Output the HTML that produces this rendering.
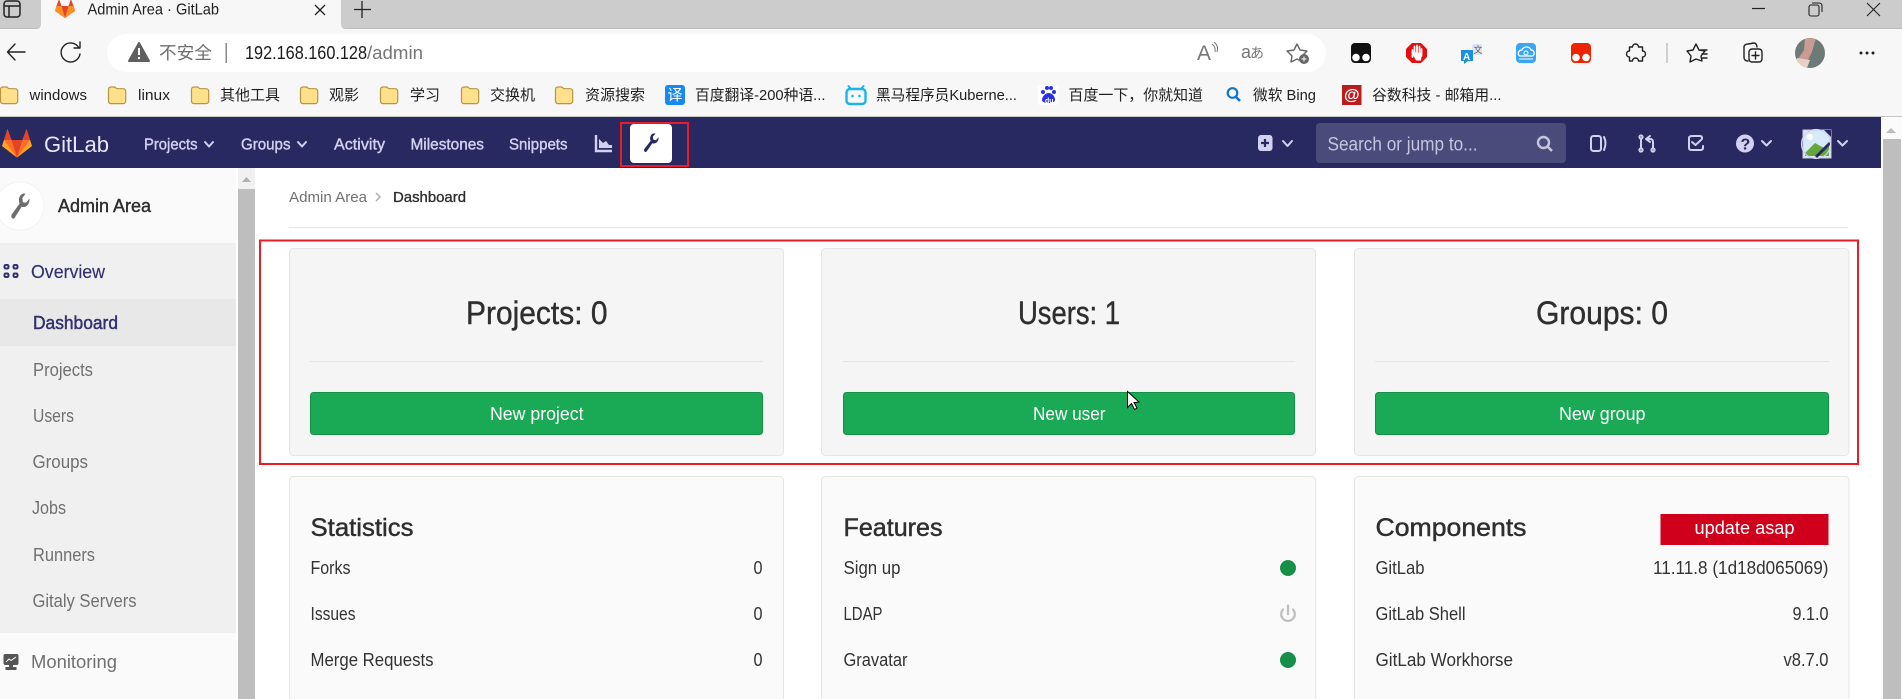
<!DOCTYPE html>
<html lang="zh"><head><meta charset="utf-8"><title>Admin Area · GitLab</title>
<style>
html,body{margin:0;padding:0;background:#fff;width:1902px;height:699px;overflow:hidden}
svg{display:block}
text{font-family:"Liberation Sans","Noto Sans CJK SC",sans-serif;white-space:pre}
.bm{font-size:15px;fill:#1f1f1f}
.nav{font-size:16px;fill:#d1d1f0;stroke:#d1d1f0;stroke-width:.4}
.side{font-size:18px;fill:#707070}
.row{font-size:18px;fill:#333}
.h{font-size:25px;fill:#2e2e2e;stroke:#2e2e2e;stroke-width:.45}
.t{font-size:32px;fill:#2e2e2e;stroke:#2e2e2e;stroke-width:.4}
.b{font-size:18px;fill:#fff}
.ic{fill:none;stroke:#d1d1f0;stroke-width:2;stroke-linecap:round;stroke-linejoin:round}
.tb{fill:none;stroke:#222;stroke-width:1.4;stroke-linecap:round;stroke-linejoin:round}
</style></head><body>
<svg xmlns="http://www.w3.org/2000/svg" width="1902" height="699" viewBox="0 0 1902 699">
<defs>
<path id="fd" d="M1.5 3.5C1.5 2 2.5 1 4 1H7.5C8.700 1 9 2.700 10.200 2.700H16C17.600 2.700 18.700 3.800 18.700 5.300V15C18.700 16.600 17.600 17.600 16 17.600H4C2.500 17.600 1.500 16.600 1.500 15Z" fill="#ffe08c" stroke="#b9953f" stroke-width="1.200"/>
<path id="wr" d="M15.600 3.400 12.900 6 10.300 5.600 9.900 3 12.500 .5C10.100-.2 7.700 1.200 7.200 3.600 7 4.700 7.200 5.700 7.700 6.500L1.500 13.100C.8 13.800.9 14.900 1.500 15.400 2.200 16 3.300 15.900 3.900 15.100L9.300 8.500C12 9.500 15.900 7.400 15.600 3.400Z"/>
</defs>

<!-- browser chrome -->
<rect width="1902" height="29" fill="#cccccc"/>
<rect y="28" width="1902" height="1" fill="#bcbcbc"/>
<rect y="29" width="1902" height="88" fill="#f7f7f7"/>
<rect y="116" width="1902" height="1" fill="#c6c6c6"/>
<path d="M41 0H341V24Q341 29 346 29H36Q41 29 41 24Z" fill="#f7f7f7"/>
<rect x="4" y="1" width="16" height="16" rx="3" fill="none" stroke="#222" stroke-width="1.500"/>
<path d="M4 6H20M9 6V17" stroke="#222" stroke-width="1.500" fill="none"/>
<g transform="translate(55,-1)"><path d="M10 19 0 12 1.500 7 4 0 6.500 7H13.500L16 0 18.500 7 20 12Z" fill="#e24329"/><path d="M10 19 0 12 1.500 7H6.500ZM10 19 20 12 18.500 7H13.500Z" fill="#fc6d26"/><path d="M0 12 1.500 7H6.500L10 19ZM20 12 18.500 7H13.500L10 19Z" fill="#fca326" opacity=".65"/></g>
<text x="87.500" y="14.500" font-size="16" fill="#222" textLength="131.500" lengthAdjust="spacingAndGlyphs">Admin Area · GitLab</text>
<path d="M315 5 325 15M325 5 315 15" stroke="#222" stroke-width="1.300"/>
<path d="M362 1V18M354 9.500H371" stroke="#222" stroke-width="1.300"/>
<path d="M1752 8.500H1765" stroke="#222" stroke-width="1.200"/>
<rect x="1809" y="5" width="10" height="11" rx="2" fill="none" stroke="#222" stroke-width="1.100"/>
<path d="M1812 3H1819Q1822 3 1822 6V12" fill="none" stroke="#222" stroke-width="1.100"/>
<path d="M1867 3 1880 16M1880 3 1867 16" stroke="#222" stroke-width="1.100"/>

<path d="M25 52H8M15 44 7.500 52 15 60" class="tb"/>
<path d="M79 48A9.500 9.500 0 1 0 80 54M80 42V48H74" class="tb"/>
<rect x="107" y="34" width="1219" height="38" rx="19" fill="#fff"/>
<path d="M139 43 149 61H129Z" fill="#5f5f5f" stroke="#5f5f5f" stroke-width="2" stroke-linejoin="round"/><path d="M139 48V55M139 57V59" stroke="#fff" stroke-width="2"/>
<text x="159" y="59" font-size="17.600" fill="#6e6e6e" textLength="53">不安全</text>
<rect x="225.500" y="43" width="1.500" height="20" fill="#8a8a8a"/>
<text x="245" y="59" font-size="18" fill="#1a1a1a" textLength="122" lengthAdjust="spacingAndGlyphs">192.168.160.128</text>
<text x="367" y="59" font-size="18" fill="#767676" textLength="56" lengthAdjust="spacingAndGlyphs">/admin</text>
<text x="1197" y="60" font-size="21" fill="#777" textLength="14" lengthAdjust="spacingAndGlyphs">A</text>
<path d="M1212 44Q1216 47 1215 52M1214 42Q1219 46 1217 52" stroke="#777" fill="none"/>
<text x="1241" y="58" font-size="18" fill="#777" textLength="10" lengthAdjust="spacingAndGlyphs">a</text>
<text x="1250" y="58" font-size="14" fill="#777">あ</text>
<path d="M1297 44 1300 50 1307 51 1302 56 1303 62 1297 59 1291 62 1292 56 1287 51 1294 50Z" fill="#fff" stroke="#666" stroke-width="1.400" stroke-linejoin="round"/>
<circle cx="1304" cy="59" r="5" fill="#666"/><path d="M1304 56.500V61.500M1301.500 59H1306.500" stroke="#fff"/>

<!-- extension icons -->
<rect x="1351" y="43" width="20" height="20" rx="4" fill="#111"/><circle cx="1356" cy="57.500" r="3.800" fill="#fff"/><circle cx="1366" cy="57.500" r="3.800" fill="#fff"/>
<path d="M1412 43H1421L1427 49V57L1421 63H1412L1406 57V49Z" fill="#e30e0e"/>
<path d="M1412.500 57V50M1414.500 56V46.500M1417 56V45.500M1419.500 56V46.500M1421.500 56V49" stroke="#fff" stroke-width="1.800" stroke-linecap="round"/><path d="M1411.500 52 1416 60.500H1421L1422 53Z" fill="#fff"/>
<rect x="1472" y="44" width="10" height="11" rx="2" fill="#dfe3f2"/><text x="1473.500" y="53" font-size="9" fill="#555">文</text>
<path d="M1461 50H1473V61H1468L1464 64V61H1461Z" fill="#1d8fdc"/><text x="1463" y="60" font-size="10" fill="#fff" font-weight="bold">A</text>
<rect x="1516" y="43" width="20" height="20" rx="4" fill="#38a6f5"/><path d="M1520 56C1517 55 1518 50 1522 50 1523 46 1530 46 1531 50 1535 50 1535 56 1532 56Z" fill="none" stroke="#fff" stroke-width="1.300"/><circle cx="1526" cy="53" r="2" fill="none" stroke="#fff"/><path d="M1519 59H1533" stroke="#fff"/>
<rect x="1571" y="43" width="20" height="20" rx="4" fill="#ec2500"/><circle cx="1576" cy="57.500" r="3.800" fill="#fff"/><circle cx="1586" cy="57.500" r="3.800" fill="#fff"/>
<path d="M1633 47C1633 43 1639 43 1639 47H1643V51C1647 51 1647 57 1643 57V61H1639C1639 57 1633 57 1633 61H1630V57C1626 57 1626 51 1630 51V47Z" transform="translate(-.5,0)" class="tb"/>
<rect x="1666" y="43" width="2" height="20" fill="#d0d0d0"/>
<path d="M1696 44 1699 50 1705 51 1701 56 1702 61 1696 59 1690 62 1691 56 1687 51 1693 50Z" class="tb"/>
<path d="M1701 50H1707M1702 54H1707M1702 58H1707" class="tb"/>
<path d="M1748 61C1745 61 1744 59 1744 57V47C1744 45 1746 44 1748 44L1754 43C1755 43 1757 44 1757 47" class="tb"/>
<rect x="1749" y="49" width="13" height="13" rx="3" class="tb"/><path d="M1755.500 52V59M1752 55.500H1759" class="tb"/>
<clipPath id="av"><circle cx="1810" cy="53" r="15"/></clipPath>
<g clip-path="url(#av)"><rect x="1795" y="38" width="30" height="30" fill="#6c7a78"/><path d="M1805 38 1816 38 1812 52 1807 62 1796 62 1804 50Z" fill="#c99b92"/><path d="M1797 58 1810 60 1807 68 1795 68Z" fill="#e9d0c5"/></g>
<circle cx="1861" cy="53" r="1.500" fill="#222"/><circle cx="1867" cy="53" r="1.500" fill="#222"/><circle cx="1873" cy="53" r="1.500" fill="#222"/>

<!-- bookmarks -->
<use href="#fd" x="-1" y="86"/><text class="bm" x="29.500" y="100" textLength="57.500" lengthAdjust="spacingAndGlyphs">windows</text>
<use href="#fd" x="107" y="86"/><text class="bm" x="138" y="100" textLength="32" lengthAdjust="spacingAndGlyphs">linux</text>
<use href="#fd" x="190" y="86"/><text class="bm" x="220" y="100" textLength="60">其他工具</text>
<use href="#fd" x="299" y="86"/><text class="bm" x="329" y="100" textLength="30">观影</text>
<use href="#fd" x="379" y="86"/><text class="bm" x="410" y="100" textLength="30">学习</text>
<use href="#fd" x="460" y="86"/><text class="bm" x="490" y="100" textLength="45">交换机</text>
<use href="#fd" x="554" y="86"/><text class="bm" x="585" y="100" textLength="60">资源搜索</text>
<rect x="665" y="85" width="20" height="20" rx="3" fill="#1787f2"/><text x="667.500" y="100" font-size="15" fill="#fff">译</text>
<text class="bm" x="695" y="100" textLength="130.500" lengthAdjust="spacingAndGlyphs">百度翻译-200种语...</text>
<rect x="846.500" y="89" width="19" height="15" rx="3.500" fill="none" stroke="#19b4e8" stroke-width="2.400"/><path d="M851 89 848 85.500M861 89 864 85.500" stroke="#19b4e8" stroke-width="2"/><circle cx="852.500" cy="96" r="1.300" fill="#19b4e8"/><circle cx="859.500" cy="96" r="1.300" fill="#19b4e8"/>
<text class="bm" x="876" y="100" textLength="141" lengthAdjust="spacingAndGlyphs">黑马程序员Kuberne...</text>
<rect x="1038" y="85" width="20" height="20" rx="2" fill="#fff"/><g fill="#2932e1"><circle cx="1043" cy="92" r="2"/><circle cx="1047" cy="88" r="2"/><circle cx="1051" cy="88" r="2"/><circle cx="1054" cy="92" r="2"/><path d="M1042 100C1042 96 1046 93 1048.500 93 1052 93 1055 96 1055 100 1055 104 1042 104 1042 100Z"/></g>
<text x="1045" y="103" font-size="7" fill="#fff" font-weight="bold">du</text>
<text class="bm" x="1068.500" y="100" textLength="134.500" lengthAdjust="spacingAndGlyphs">百度一下，你就知道</text>
<circle cx="1232.500" cy="93" r="4.800" fill="none" stroke="#0f76c8" stroke-width="2.200"/><path d="M1236 97 1240 101" stroke="#0f76c8" stroke-width="2.600"/>
<text class="bm" x="1253" y="100" textLength="63" lengthAdjust="spacingAndGlyphs">微软 Bing</text>
<rect x="1342" y="85" width="19.500" height="20" fill="#bb1c1c"/><text x="1344" y="100" font-size="16" fill="#fff" font-weight="bold">@</text>
<text class="bm" x="1372" y="100" textLength="129.500" lengthAdjust="spacingAndGlyphs">谷数科技 - 邮箱用...</text>

<!-- navbar -->
<rect y="117" width="1881" height="51" fill="#292961"/>
<rect x="1881" y="117" width="21" height="582" fill="#fbfbfb"/>
<path d="M1886 133 1891 128 1896 133Z" fill="#bcbcbc"/>
<rect x="1883" y="139" width="18" height="560" fill="#bebebe"/>
<g transform="translate(2,129)"><path d="M15 28.500 0 17 2 11 5.500 0 9.500 11H20.500L24.500 0 28 11 30 17Z" fill="#fc6d26"/><path d="M15 28.500 9.500 11H20.500Z" fill="#e24329"/><path d="M15 28.500 2 11H9.500ZM15 28.500 28 11H20.500Z" fill="#fc6d26"/><path d="M2 11 0 17 15 28.500ZM28 11 30 17 15 28.500Z" fill="#fca326"/><path d="M2 11H9.500L5.500 0ZM28 11H20.500L24.500 0Z" fill="#e24329"/></g>
<text x="44" y="152" font-size="22" fill="#e6e6f4" textLength="65" lengthAdjust="spacingAndGlyphs">GitLab</text>
<text class="nav" x="144" y="149.500" textLength="53.500" lengthAdjust="spacingAndGlyphs">Projects</text><path d="M205 142 209 146.500 213 142" class="ic" stroke-width="1.500"/>
<text class="nav" x="241" y="149.500" textLength="49.500" lengthAdjust="spacingAndGlyphs">Groups</text><path d="M298 142 302 146.500 306 142" class="ic" stroke-width="1.500"/>
<text class="nav" x="334" y="149.500" textLength="51" lengthAdjust="spacingAndGlyphs">Activity</text>
<text class="nav" x="410.500" y="149.500" textLength="73.500" lengthAdjust="spacingAndGlyphs">Milestones</text>
<text class="nav" x="509" y="149.500" textLength="58.500" lengthAdjust="spacingAndGlyphs">Snippets</text>
<path d="M596 135V151H612" fill="none" stroke="#d1d1f0" stroke-width="2.400"/><path d="M599 148V139L603 143 606 141 609 145 612 145V148Z" fill="#d1d1f0"/>
<rect x="630" y="124" width="42" height="39" rx="4" fill="#fff"/>
<rect x="621" y="123" width="67" height="43" fill="none" stroke="#ed1c24" stroke-width="2"/>
<use href="#wr" fill="#292961" transform="translate(643,133) scale(1,1.200)"/>
<rect x="1258" y="135" width="14.500" height="16" rx="3" fill="#d1d1f0"/><path d="M1265 139V147M1261 143H1269" stroke="#292961" stroke-width="2.200"/>
<path d="M1283 141 1287.500 146 1292 141" class="ic"/>
<rect x="1316" y="123" width="250" height="40" rx="4" fill="#4a4a7b"/>
<text x="1327.500" y="150.500" font-size="19" fill="#c5c5e0" textLength="150" lengthAdjust="spacingAndGlyphs">Search or jump to...</text>
<circle cx="1543.500" cy="142.500" r="5.500" fill="none" stroke="#c5c5e0" stroke-width="2.400"/><path d="M1548 147 1552 151" stroke="#c5c5e0" stroke-width="2.600"/>
<rect x="1591" y="136" width="10" height="15" rx="2.500" class="ic"/><path d="M1604 137Q1607 143 1604 150" class="ic" stroke-width="1.700"/>
<path d="M1641 139V148M1650 136 1646 139 1650 142M1646 139H1650Q1653 139 1653 142V148" class="ic" stroke-width="1.400"/><circle cx="1641" cy="137" r="1.600" class="ic" stroke-width="1.100"/><circle cx="1641" cy="150" r="1.600" class="ic" stroke-width="1.100"/><circle cx="1653" cy="150" r="1.600" class="ic" stroke-width="1.100"/>
<path d="M1702 139V138Q1702 136 1700 136H1692Q1689 136 1689 138V148Q1689 150 1692 150H1700Q1703 150 1703 148V146M1692 142 1695.500 145 1701 140" class="ic"/>
<circle cx="1745" cy="143.500" r="9" fill="#d1d1f0"/><text x="1740.500" y="149.500" font-size="16" font-weight="bold" fill="#292961">?</text>
<path d="M1762 141 1766.500 145.500 1771 141" class="ic" stroke-width="1.700"/>
<rect x="1803" y="130" width="28" height="28" fill="#d7eaf7" stroke="#cfcfcf"/>
<path d="M1824 130H1831V137Z" fill="#292961"/><path d="M1805 153 1815 143 1824 148 1829 146V156H1805Z" fill="#66a83e"/><path d="M1816 157 1830 143" stroke="#292961" stroke-width="3"/>
<circle cx="1810" cy="137" r="3" fill="#fff"/>
<circle cx="1816" cy="144" r="14.500" fill="none" stroke="#d1d1f0" stroke-width="1.200"/>
<path d="M1838 141 1842.500 145.500 1847 141" class="ic" stroke-width="1.700"/>

<!-- sidebar -->
<rect y="168" width="236" height="531" fill="#fafafa"/>
<rect x="238" y="168" width="17" height="531" fill="#f1f1f1"/>
<path d="M242 182 246.500 177 251 182Z" fill="#b0b0b0"/>
<rect x="238" y="189" width="17" height="510" fill="#bebebe"/>
<rect y="243" width="236" height="390" fill="#f0f0f0"/>
<rect y="299" width="236" height="47" fill="#e8e8e8"/>
<circle cx="20" cy="206" r="24" fill="#fff" stroke="#f3f3f3"/>
<use href="#wr" fill="#6e6e6e" transform="translate(10,193) scale(1.250,1.620)"/>
<text x="58" y="212" font-size="18" fill="#2e2e2e" stroke="#2e2e2e" stroke-width=".4" textLength="93" lengthAdjust="spacingAndGlyphs">Admin Area</text>
<g fill="none" stroke="#33306f" stroke-width="2"><rect x="4.500" y="265" width="4" height="3.500" rx="1.200"/><rect x="13.500" y="265" width="4" height="3.500" rx="1.200"/><rect x="4.500" y="273.500" width="4" height="3.500" rx="1.200"/><rect x="13.500" y="273.500" width="4" height="3.500" rx="1.200"/></g>
<text x="31" y="278" font-size="18" fill="#33306f" stroke="#33306f" stroke-width=".15" textLength="74" lengthAdjust="spacingAndGlyphs">Overview</text>
<text x="33" y="329" font-size="18" fill="#33306f" stroke="#33306f" stroke-width=".45" textLength="85" lengthAdjust="spacingAndGlyphs">Dashboard</text>
<text class="side" x="33" y="376" textLength="60" lengthAdjust="spacingAndGlyphs">Projects</text>
<text class="side" x="33" y="422" textLength="41" lengthAdjust="spacingAndGlyphs">Users</text>
<text class="side" x="32.500" y="468" textLength="55.500" lengthAdjust="spacingAndGlyphs">Groups</text>
<text class="side" x="32" y="514" textLength="34" lengthAdjust="spacingAndGlyphs">Jobs</text>
<text class="side" x="33" y="561" textLength="62" lengthAdjust="spacingAndGlyphs">Runners</text>
<text class="side" x="32.500" y="607" textLength="104" lengthAdjust="spacingAndGlyphs">Gitaly Servers</text>
<rect x="3.500" y="654" width="15" height="11" rx="2" fill="#555"/><path d="M6 662 9 659 11 660.500 16 657" stroke="#fff" fill="none"/><rect x="9" y="665" width="4" height="2" fill="#555"/><rect x="5.500" y="667" width="11" height="3" fill="#555"/>
<text class="side" x="31" y="668" textLength="86" lengthAdjust="spacingAndGlyphs">Monitoring</text>

<!-- breadcrumb -->
<text x="289" y="202" font-size="15" fill="#707070" textLength="78" lengthAdjust="spacingAndGlyphs">Admin Area</text>
<path d="M376 193 380 197 376 201" fill="none" stroke="#aaa" stroke-width="1.400"/>
<text x="393" y="202" font-size="15" fill="#2e2e2e" stroke="#2e2e2e" stroke-width=".35" textLength="73" lengthAdjust="spacingAndGlyphs">Dashboard</text>
<rect x="289" y="227" width="1559" height="1" fill="#e5e5e5"/>

<!-- top cards -->
<g fill="#f5f5f5" stroke="#e5e5e5"><rect x="289.500" y="248.500" width="494" height="207" rx="4"/><rect x="821.500" y="248.500" width="494" height="207" rx="4"/><rect x="1354.500" y="248.500" width="494.500" height="207" rx="4"/></g>
<text class="t" x="466" y="324" textLength="141.500" lengthAdjust="spacingAndGlyphs">Projects: 0</text>
<text class="t" x="1018" y="324" textLength="102" lengthAdjust="spacingAndGlyphs">Users: 1</text>
<text class="t" x="1536" y="324" textLength="132" lengthAdjust="spacingAndGlyphs">Groups: 0</text>
<g fill="#e5e5e5"><rect x="310" y="361" width="453" height="1"/><rect x="843" y="361" width="452" height="1"/><rect x="1375" y="361" width="454" height="1"/></g>
<g fill="#1aaa55" stroke="#168f48"><rect x="310.500" y="392.500" width="452" height="42" rx="3"/><rect x="843.500" y="392.500" width="451" height="42" rx="3"/><rect x="1375.500" y="392.500" width="453" height="42" rx="3"/></g>
<text class="b" x="490" y="420" textLength="93.500" lengthAdjust="spacingAndGlyphs">New project</text>
<text class="b" x="1033" y="420" textLength="72.500" lengthAdjust="spacingAndGlyphs">New user</text>
<text class="b" x="1559" y="420" textLength="86.500" lengthAdjust="spacingAndGlyphs">New group</text>

<!-- red highlight -->
<rect x="260" y="240.500" width="1598" height="223.500" fill="none" stroke="#ed1c24" stroke-width="2"/>

<!-- bottom cards -->
<g fill="#fafafa" stroke="#e5e5e5"><path d="M289.500 699V480.500A4 4 0 0 1 293.500 476.500H779.500A4 4 0 0 1 783.500 480.500V699"/><path d="M821.500 699V480.500A4 4 0 0 1 825.500 476.500H1311.500A4 4 0 0 1 1315.500 480.500V699"/><path d="M1354.500 699V480.500A4 4 0 0 1 1358.500 476.500H1845A4 4 0 0 1 1849 480.500V699"/></g>
<text class="h" x="310.500" y="536" textLength="103" lengthAdjust="spacingAndGlyphs">Statistics</text>
<text class="h" x="843.500" y="536" textLength="99" lengthAdjust="spacingAndGlyphs">Features</text>
<text class="h" x="1375.500" y="536" textLength="151" lengthAdjust="spacingAndGlyphs">Components</text>
<rect x="1660.500" y="514" width="168" height="31" fill="#d0001c"/>
<text x="1694.500" y="534" font-size="18" fill="#fff" textLength="100" lengthAdjust="spacingAndGlyphs">update asap</text>

<text class="row" x="310.500" y="574" textLength="40" lengthAdjust="spacingAndGlyphs">Forks</text><text class="row" x="753.500" y="574" textLength="9" lengthAdjust="spacingAndGlyphs">0</text>
<text class="row" x="310.500" y="620" textLength="45" lengthAdjust="spacingAndGlyphs">Issues</text><text class="row" x="753.500" y="620" textLength="9" lengthAdjust="spacingAndGlyphs">0</text>
<text class="row" x="310.500" y="666" textLength="123" lengthAdjust="spacingAndGlyphs">Merge Requests</text><text class="row" x="753.500" y="666" textLength="9" lengthAdjust="spacingAndGlyphs">0</text>

<text class="row" x="843.500" y="574" textLength="57" lengthAdjust="spacingAndGlyphs">Sign up</text><circle cx="1288" cy="568" r="8" fill="#168f48"/>
<text class="row" x="843.500" y="620" textLength="39" lengthAdjust="spacingAndGlyphs">LDAP</text>
<path d="M1283 609.500A6.800 6.800 0 1 0 1293 609.500M1288 605.500V614" fill="none" stroke="#bfbfbf" stroke-width="2.300" stroke-linecap="round"/>
<text class="row" x="843.500" y="666" textLength="64" lengthAdjust="spacingAndGlyphs">Gravatar</text><circle cx="1288" cy="660" r="8" fill="#168f48"/>

<text class="row" x="1375.500" y="574" textLength="49" lengthAdjust="spacingAndGlyphs">GitLab</text><text class="row" x="1653" y="574" textLength="175.500" lengthAdjust="spacingAndGlyphs">11.11.8 (1d18d065069)</text>
<text class="row" x="1375.500" y="620" textLength="90" lengthAdjust="spacingAndGlyphs">GitLab Shell</text><text class="row" x="1792.500" y="620" textLength="36" lengthAdjust="spacingAndGlyphs">9.1.0</text>
<text class="row" x="1375.500" y="666" textLength="137.500" lengthAdjust="spacingAndGlyphs">GitLab Workhorse</text><text class="row" x="1783.500" y="666" textLength="45" lengthAdjust="spacingAndGlyphs">v8.7.0</text>

<!-- cursor -->
<path d="M1127.500 391.500V407.500L1131.500 403.500 1134.500 409.500 1137 408 1134 402.500 1139 402Z" fill="#fff" stroke="#000"/>
</svg>
</body></html>
